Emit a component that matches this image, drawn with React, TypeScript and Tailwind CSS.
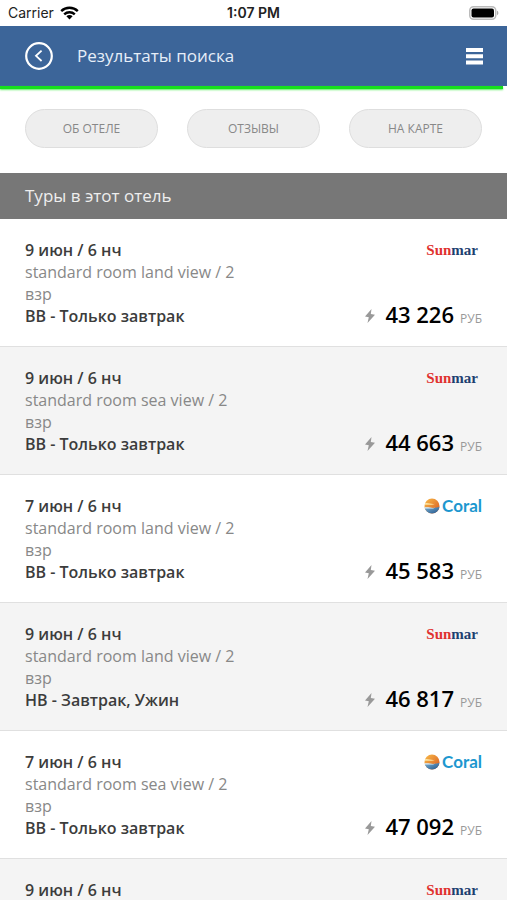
type Operator = "sunmar" | "coral";

interface Tour {
  id: number;
  date: string;
  room: string;
  meal: string;
  price: string;
  operator: Operator;
}

const tours: Tour[] = [
  { id: 1, date: "9 июн / 6 нч", room: "standard room land view / 2 взр", meal: "BB - Только завтрак", price: "43 226", operator: "sunmar" },
  { id: 2, date: "9 июн / 6 нч", room: "standard room sea view / 2 взр", meal: "BB - Только завтрак", price: "44 663", operator: "sunmar" },
  { id: 3, date: "7 июн / 6 нч", room: "standard room land view / 2 взр", meal: "BB - Только завтрак", price: "45 583", operator: "coral" },
  { id: 4, date: "9 июн / 6 нч", room: "standard room land view / 2 взр", meal: "HB - Завтрак, Ужин", price: "46 817", operator: "sunmar" },
  { id: 5, date: "7 июн / 6 нч", room: "standard room sea view / 2 взр", meal: "BB - Только завтрак", price: "47 092", operator: "coral" },
  { id: 6, date: "9 июн / 6 нч", room: "standard room land view / 2 взр", meal: "BB - Только завтрак", price: "47 310", operator: "sunmar" },
];

function StatusBar() {
  return (
    <div className="grid h-[26px] shrink-0 grid-cols-3 items-center bg-white px-2 font-['Inter',sans-serif] text-sm text-[#222]">
      <div className="flex items-center gap-1.5">
        <span>Carrier</span>
        <svg width="19" height="14" viewBox="0 0 19 14" fill="none" stroke="#000" strokeWidth="2.4" aria-hidden="true">
          <path d="M1.2 5.2a11.8 11.8 0 0 1 16.6 0" />
          <path d="M4.2 8.4a7.6 7.6 0 0 1 10.6 0" />
          <path d="M9.5 13.4 6.4 10.3a4.4 4.4 0 0 1 6.2 0z" fill="#000" stroke="none" />
        </svg>
      </div>
      <span className="text-center font-semibold">1:07 PM</span>
      <svg className="justify-self-end" width="30" height="14" viewBox="0 0 30 14" aria-hidden="true">
        <rect x="0.75" y="0.75" width="26" height="12.5" rx="3.8" fill="#fff" stroke="#bbb" strokeWidth="1.5" />
        <rect x="2.5" y="2.5" width="22.5" height="9" rx="2" fill="#000" />
        <path d="M28 4.8c1.8.6 1.8 3.8 0 4.4z" fill="#aaa" />
      </svg>
    </div>
  );
}

function Header() {
  return (
    <header className="shrink-0 bg-[#3c6599]">
      <div className="flex h-[60px] items-center px-6">
        <button type="button" aria-label="Назад" className="text-white">
          <svg width="30" height="30" viewBox="0 0 30 30" fill="none" stroke="currentColor" aria-hidden="true">
            <circle cx="15" cy="15" r="12.8" strokeWidth="2.2" />
            <path d="m17.6 9.6-5.6 5.2 5.6 5.2" strokeWidth="1.8" />
          </svg>
        </button>
        <h1 className="ml-[23px] grow text-[17px] text-[#e6eef8]">Результаты поиска</h1>
        <button type="button" aria-label="Меню" className="text-white">
          <svg width="18" height="18" viewBox="0 0 18 18" fill="currentColor" aria-hidden="true">
            <path d="M1 1h17v4H1zM1 7.200h17v4H1zM1 13.400h17v4H1z" />
          </svg>
        </button>
      </div>
      <div className="bg-white">
        <div className="mr-1 h-[3px] bg-[#17e01c] shadow-[0_1px_2px_#5fee62]" />
      </div>
    </header>
  );
}

function PillButton({ label }: { label: string }) {
  return (
    <button type="button" className="h-[39px] flex-1 rounded-full border border-[#dedede] bg-[#eee] text-xs text-[#888]">
      {label}
    </button>
  );
}

function SunmarLogo() {
  return (
    <span className="pr-1 font-['Liberation_Serif',serif] text-[15px] leading-[22px] font-bold text-[#1d3f70]">
      <span className="text-[#e0322f]">Sun</span>mar
    </span>
  );
}

function CoralLogo() {
  return (
    <span className="flex items-center gap-0.5 font-['Lato',sans-serif] text-[17px] leading-[22px] font-bold text-[#1c97cf]">
      <svg width="16" height="16" viewBox="0 0 16 16" aria-hidden="true">
        <defs>
          <linearGradient id="sky" x1="0" y1="0" x2="1" y2="1">
            <stop offset="0" stopColor="#fbc04a" />
            <stop offset="1" stopColor="#d4511e" />
          </linearGradient>
          <linearGradient id="sea" x1="0" y1="0" x2="1" y2="1">
            <stop offset="0" stopColor="#7fb6d8" />
            <stop offset="1" stopColor="#1d4f86" />
          </linearGradient>
          <clipPath id="ball">
            <circle cx="8" cy="8" r="7.500" />
          </clipPath>
        </defs>
        <g clipPath="url(#ball)">
          <rect width="16" height="16" fill="url(#sky)" />
          <path d="M0 5.500c4-1.500 7 1.200 11 .3-3 2-7 .2-11 1.200z" fill="#fde3a0" />
          <path d="M0 10c5-1.500 9 1.500 16-1.500V16H0z" fill="url(#sea)" />
          <path d="M0 9.500c4-1 7 1 11 .3-3 1.600-7 .2-11 .9z" fill="#e3eef4" />
        </g>
      </svg>
      <span>Coral</span>
    </span>
  );
}

function TourRow({ tour }: { tour: Tour }) {
  return (
    <li className="border-b border-[#e0e0e0] odd:bg-white even:bg-[#f4f4f4]">
      <a href={`#tour-${tour.id}`} className="flex justify-between px-[25px] pt-5 pb-[19px] text-base leading-[22px]">
        <div className="w-[220px] text-[#888]">
          <p className="font-semibold text-[#3c3c3c]">{tour.date}</p>
          <p>{tour.room}</p>
          <p className="font-semibold text-[#3c3c3c]">{tour.meal}</p>
        </div>
        <div className="flex flex-col items-end justify-between">
          {tour.operator === "sunmar" ? <SunmarLogo /> : <CoralLogo />}
          <p className="flex items-baseline">
            <svg className="mr-2.5" width="10" height="14" viewBox="0 0 10 14" fill="#999" aria-hidden="true">
              <path d="M6.500 0 0 7.500l3.800.8L2.500 14 10 5.800 5.800 5z" />
            </svg>
            <span className="text-[22px] font-semibold text-black">{tour.price}</span>
            <span className="ml-1.5 text-xs text-[#999]">РУБ</span>
          </p>
        </div>
      </a>
    </li>
  );
}

export default function App() {
  return (
    <div className="flex h-screen flex-col overflow-hidden bg-white font-['Open_Sans',sans-serif]">
      <StatusBar />
      <Header />
      <main className="min-h-0 grow overflow-y-auto [scrollbar-width:none]">
        <nav className="flex gap-[29px] px-[25px] pt-5 pb-[25px]">
          <PillButton label="ОБ ОТЕЛЕ" />
          <PillButton label="ОТЗЫВЫ" />
          <PillButton label="НА КАРТЕ" />
        </nav>
        <h2 className="bg-[#777] px-[25px] py-[11px] text-[17px] leading-6 text-[#eee]">Туры в этот отель</h2>
        <ul>
          {tours.map((tour) => (
            <TourRow key={tour.id} tour={tour} />
          ))}
        </ul>
      </main>
    </div>
  );
}
